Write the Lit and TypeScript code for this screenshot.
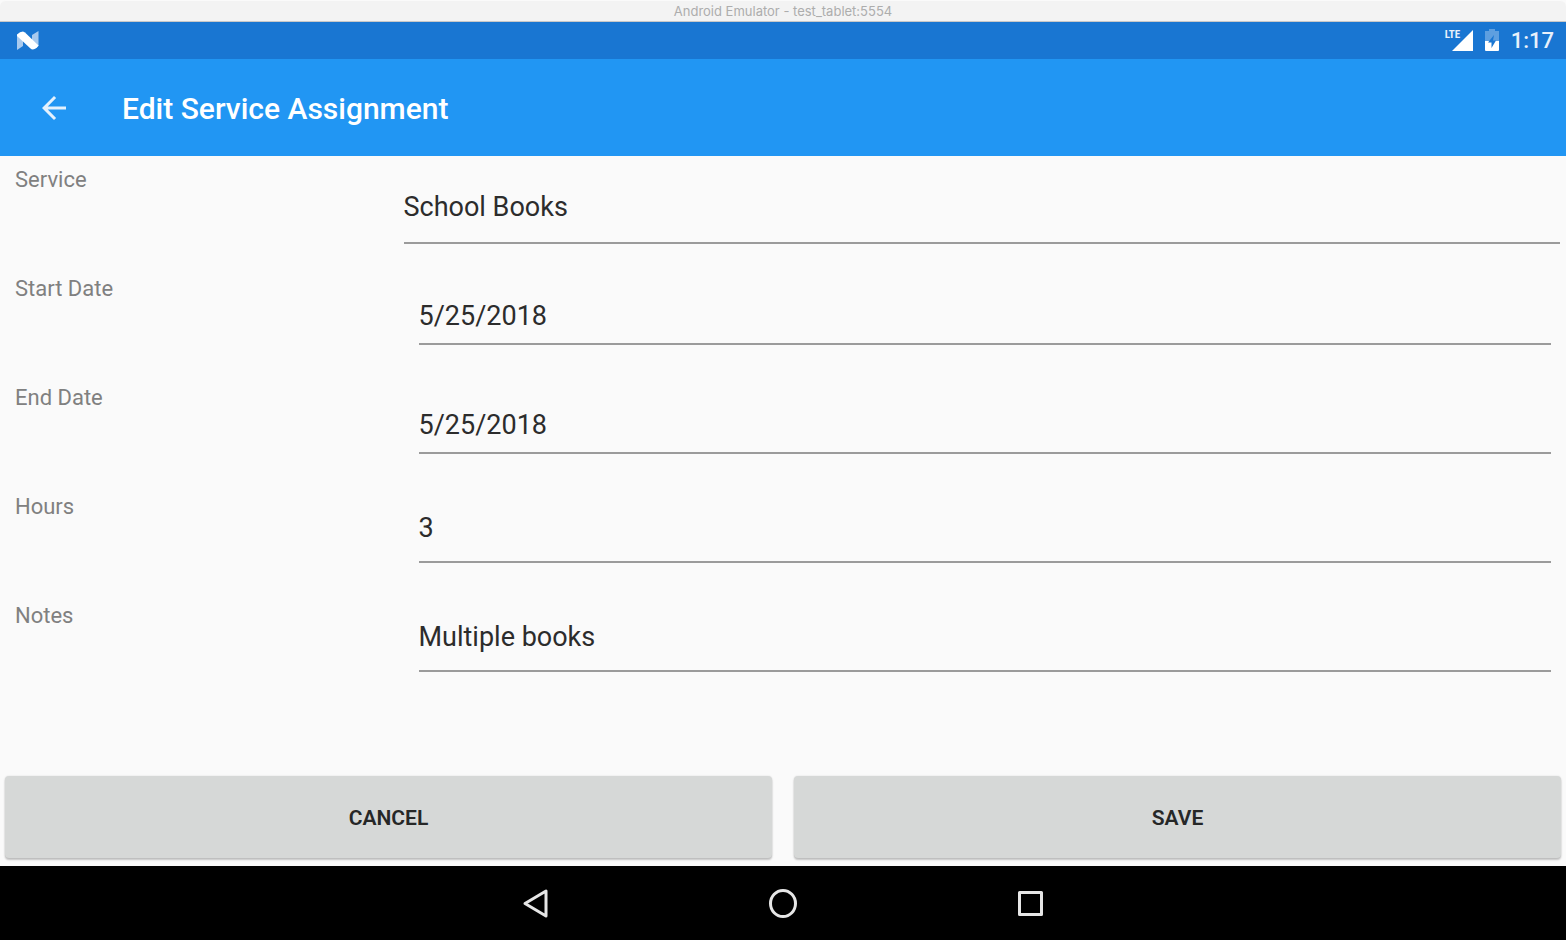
import { LitElement, html, css, svg } from "lit";
import { customElement, state } from "lit/decorators.js";

@customElement("status-bar")
class StatusBar extends LitElement {
  static styles = css`
    :host {
      display: flex;
      align-items: center;
      justify-content: space-between;
      height: 37px;
      padding: 0 12px 0 16px;
      background: #1976d2;
      color: #e8f1fb;
    }
    svg { display: block; }
    .indicators { display: flex; align-items: center; gap: 12px; }
    .signal { position: relative; padding-left: 7px; }
    .network {
      position: absolute;
      left: 0;
      top: -1px;
      font-size: 11px;
      line-height: 12px;
      font-weight: 700;
      font-family: "Roboto Condensed", "Liberation Sans Narrow", Roboto, sans-serif;
    }
    .time { padding-top: 1px; font-size: 22px; line-height: 28px; font-weight: 500; }
  `;
  render() {
    return html`
      <svg width="24" height="20" viewBox="0 0 24 20" aria-label="Android N">
        <path d="M1 4 L7 1 V15 L1 19Z M16 4 L22.500 0 V15 L16 18Z" fill="#a9caee"></path>
        <path d="M1 3.500 Q4 0.500 7 0.500 L9 1.500 L22.500 14.500 Q20 18.500 16 18.500 L14.500 17.500 L1 5Z" fill="#fff"></path>
      </svg>
      <div class="indicators">
        <div class="signal">
          <span class="network">LTE</span>
          <svg width="21" height="22" viewBox="0 0 21 22"><path d="M0 21 L21 0 V21Z" fill="#fff"></path></svg>
        </div>
        <svg width="14" height="24" viewBox="0 0 14 24">
          <path d="M4 0H10V2H14V13H0V2H4Z" fill="#5e9fe0"></path>
          <path d="M0 12H14V21Q14 22 13 22H1Q0 22 0 21Z" fill="#fff"></path>
          <path d="M9 6 L3 13.500H6.500V19 L11 11.500H8Z" fill="#1976d2"></path>
        </svg>
        <time class="time">1:17</time>
      </div>
    `;
  }
}

@customElement("nav-bar")
class NavBar extends LitElement {
  static styles = css`
    :host {
      display: flex;
      align-items: center;
      justify-content: center;
      gap: 200px;
      height: 74px;
      background: #000;
    }
    .key {
      display: grid;
      place-items: center;
      width: 48px;
      height: 48px;
      padding: 0;
      border: 0;
      background: none;
    }
    svg { display: block; fill: none; stroke: #e6e6e6; stroke-width: 3; stroke-linejoin: round; }
  `;
  private key(label: string, shape: unknown) {
    return html`<button class="key" type="button" aria-label=${label}>
      <svg width="32" height="32" viewBox="0 0 32 32">${shape}</svg>
    </button>`;
  }
  render() {
    return html`
      ${this.key("Back", svg`<path d="M27 4V29L6 16.500Z"></path>`)}
      ${this.key("Home", svg`<ellipse cx="16" cy="16.500" rx="12.500" ry="13"></ellipse>`)}
      ${this.key("Overview", svg`<rect x="4.500" y="5.500" width="22" height="22"></rect>`)}
    `;
  }
}

interface Field {
  id: string;
  label: string;
  value: string;
  kind: "date" | "text";
}

@customElement("app-root")
class AppRoot extends LitElement {
  static styles = css`
    :host {
      display: flex;
      flex-direction: column;
      min-height: 100vh;
      background: #fafafa;
      font-family: Roboto, sans-serif;
    }
    .window-title {
      box-sizing: border-box;
      height: 22px;
      border-top: 1px solid #fafafa;
      border-bottom: 1px solid #c8c8c8;
      border-radius: 6px 6px 0 0;
      background: #f3f3f3;
      color: #adadad;
      font-family: Inter, sans-serif;
      font-size: 13px;
      line-height: 20px;
      text-align: center;
    }
    .app-bar {
      display: flex;
      align-items: center;
      gap: 50px;
      height: 97px;
      padding: 0 36px;
      background: #2196f3;
      color: #fff;
    }
    .back { padding: 0; border: 0; background: none; }
    .back svg { display: block; }
    .heading { margin: 0; padding-top: 3px; font-size: 30px; line-height: 40px; font-weight: 500; }
    .form { flex: 1; display: flex; flex-direction: column; }
    .rows {
      flex: 1;
      display: grid;
      grid-auto-rows: 1fr;
      padding: 0 6px 75px 0;
    }
    .row { display: grid; grid-template-columns: 1fr 3fr; column-gap: 18px; align-items: start; }
    .label { padding: 11px 0 0 15px; font-size: 22px; line-height: 26px; color: #808080; }
    .cell { display: flex; padding: 0 9px 0 15px; }
    .cell.wide { padding: 0; }
    .field {
      flex: 1;
      box-sizing: content-box;
      min-width: 0;
      height: 36px;
      border: 0;
      border-bottom: 2px solid #9b9b9b;
      border-radius: 0;
      outline: 0;
      appearance: none;
      background: none;
      color: #2c2c2c;
      font-family: inherit;
      font-size: 27px;
      line-height: 36px;
    }
    .field.picker { padding: 33px 0 17px; }
    .field.date { padding: 33px 0 9px; }
    .field.text { padding: 27px 0 15px; }
    .actions { display: grid; grid-template-columns: 1fr 1fr; gap: 22px; padding: 0 5px 8px; }
    .action {
      height: 82px;
      padding: 2px 0 0;
      border: 0;
      border-radius: 4px;
      background: #d6d8d7;
      box-shadow: 0 2px 2px rgba(0, 0, 0, 0.22), 0 0 2px rgba(0, 0, 0, 0.12);
      color: #262727;
      font-family: inherit;
      font-size: 21px;
      line-height: 28px;
      font-weight: 600;
    }
  `;

  @state() private fields: Field[] = [
    { id: "start", label: "Start Date", value: "5/25/2018", kind: "date" },
    { id: "end", label: "End Date", value: "5/25/2018", kind: "date" },
    { id: "hours", label: "Hours", value: "3", kind: "text" },
    { id: "notes", label: "Notes", value: "Multiple books", kind: "text" },
  ];

  render() {
    return html`
      <div class="window-title">Android Emulator - test_tablet:5554</div>
      <status-bar></status-bar>
      <header class="app-bar">
        <button class="back" type="button" aria-label="Navigate up">
          <svg width="36" height="36" viewBox="0 0 24 24" fill="#e3f1fd">
            <path d="M20 11H7.830l5.590-5.590L12 4l-8 8 8 8 1.410-1.410L7.830 13H20v-2z"></path>
          </svg>
        </button>
        <h1 class="heading">Edit Service Assignment</h1>
      </header>
      <form class="form" @submit=${(e: Event) => e.preventDefault()}>
        <div class="rows">
          <div class="row">
            <label class="label" for="service">Service</label>
            <div class="cell wide">
              <select class="field picker" id="service"><option>School Books</option></select>
            </div>
          </div>
          ${this.fields.map(
            (f) => html`<div class="row">
              <label class="label" for=${f.id}>${f.label}</label>
              <div class="cell">
                <input class="field ${f.kind}" id=${f.id} type="text" .value=${f.value} />
              </div>
            </div>`
          )}
        </div>
        <div class="actions">
          <button class="action" type="button">CANCEL</button>
          <button class="action" type="submit">SAVE</button>
        </div>
      </form>
      <nav-bar></nav-bar>
    `;
  }
}
